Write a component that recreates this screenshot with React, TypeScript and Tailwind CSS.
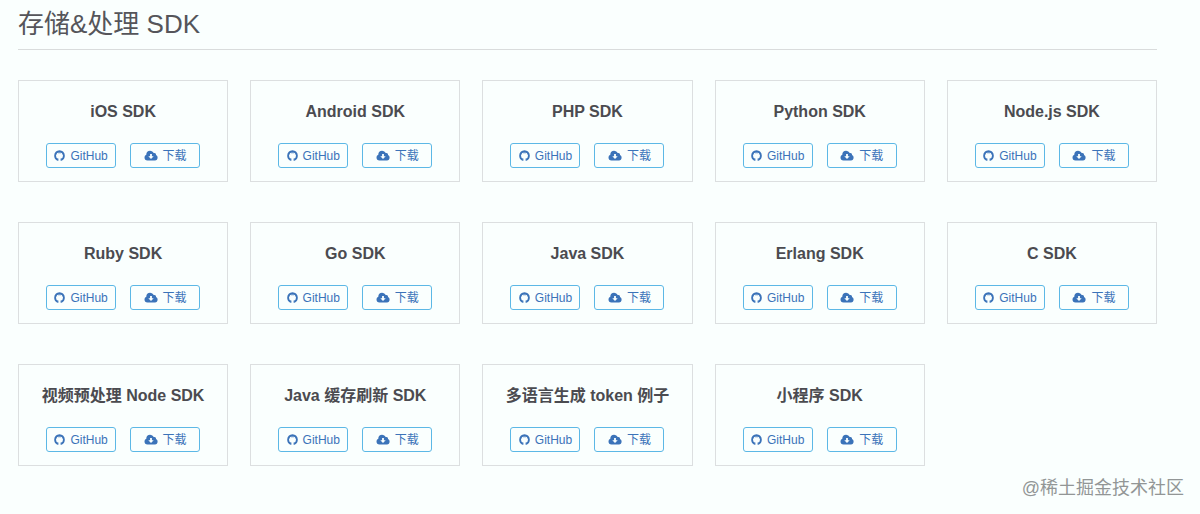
import React from 'react';

const sdks = [
  "iOS SDK",
  "Android SDK",
  "PHP SDK",
  "Python SDK",
  "Node.js SDK",
  "Ruby SDK",
  "Go SDK",
  "Java SDK",
  "Erlang SDK",
  "C SDK",
  "视频预处理 Node SDK",
  "Java 缓存刷新 SDK",
  "多语言生成 token 例子",
  "小程序 SDK",
];

const linkClass =
  "flex h-[25px] w-[70px] items-center justify-center gap-[5px] rounded-[3px] border border-[#5cb8e6] text-xs text-[#3b73b9] hover:bg-[#eaf6fd]";

const GithubIcon = () => (
  <svg viewBox="0 0 12 12" className="h-[11px] w-[11px]" fill="none" stroke="currentColor" aria-hidden="true">
    <path d="M4 10.700C2.300 9.900 1.200 8.200 1.200 6.200C1.200 3.400 3.300 1.400 6 1.400C8.700 1.400 10.800 3.400 10.800 6.200C10.800 8.200 9.700 9.900 8 10.700" strokeWidth="2" />
    <path d="M2.800 4.800V2.200L4.600 3H7.400L9.200 2.200V4.800" strokeWidth="0.900" />
    <path d="M4.200 11.600V9.200M7.800 11.600V9.200" strokeWidth="1.200" />
  </svg>
);

const CloudDownloadIcon = () => (
  <svg viewBox="0 0 14 12" className="h-3 w-[14px]" fill="currentColor" aria-hidden="true">
    <path
      fillRule="evenodd"
      d="M3.500 10.500C1.600 10.500 0.500 9.200 0.500 7.500C0.500 6.200 1.200 5.200 2.300 4.700C2.200 2.400 3.900 0.800 6 0.800C7.600 0.800 9 1.700 9.600 3.100C10.900 2.500 12.300 3.500 12 5C13.100 5.400 13.600 6.400 13.600 7.700C13.600 9.300 12.500 10.500 11 10.500ZM6.100 3.900V6.300H4.300L7 9.100L9.700 6.300H7.900V3.900Z"
    />
  </svg>
);

const SdkCard = ({ name }: { name: string }) => (
  <li className="flex flex-col items-center border border-[#dcdfe0] pt-[19px] pb-[13px]">
    <h3 className="text-base leading-6 font-bold text-[#4b4b50]">{name}</h3>
    <div className="mt-[19px] flex gap-[14px]">
      <a href="#github" aria-label={`${name} GitHub`} className={linkClass}>
        <GithubIcon />
        <span>GitHub</span>
      </a>
      <a href="#download" aria-label={`${name} 下载`} className={linkClass}>
        <CloudDownloadIcon />
        <span>下载</span>
      </a>
    </div>
  </li>
);

const App = () => {
  return (
    <div className="relative min-h-screen bg-[#fafffe] pr-[43px] pb-12 pl-[18px] font-['Liberation_Sans','Noto_Sans_CJK_SC',sans-serif]">
      <h2 className="border-b border-[#d9dcdc] pt-1 pb-[5px] text-[26px] leading-10 text-[#55555a]">
        存储&amp;处理 SDK
      </h2>

      <ul className="mt-[30px] grid grid-cols-5 gap-x-[22px] gap-y-10">
        {sdks.map((name) => (
          <SdkCard key={name} name={name} />
        ))}
      </ul>

      {/* Community watermark */}
      <span className="absolute right-4 bottom-3 text-lg leading-7 text-[#929696] select-none">
        @稀土掘金技术社区
      </span>
    </div>
  );
};

export default App;
